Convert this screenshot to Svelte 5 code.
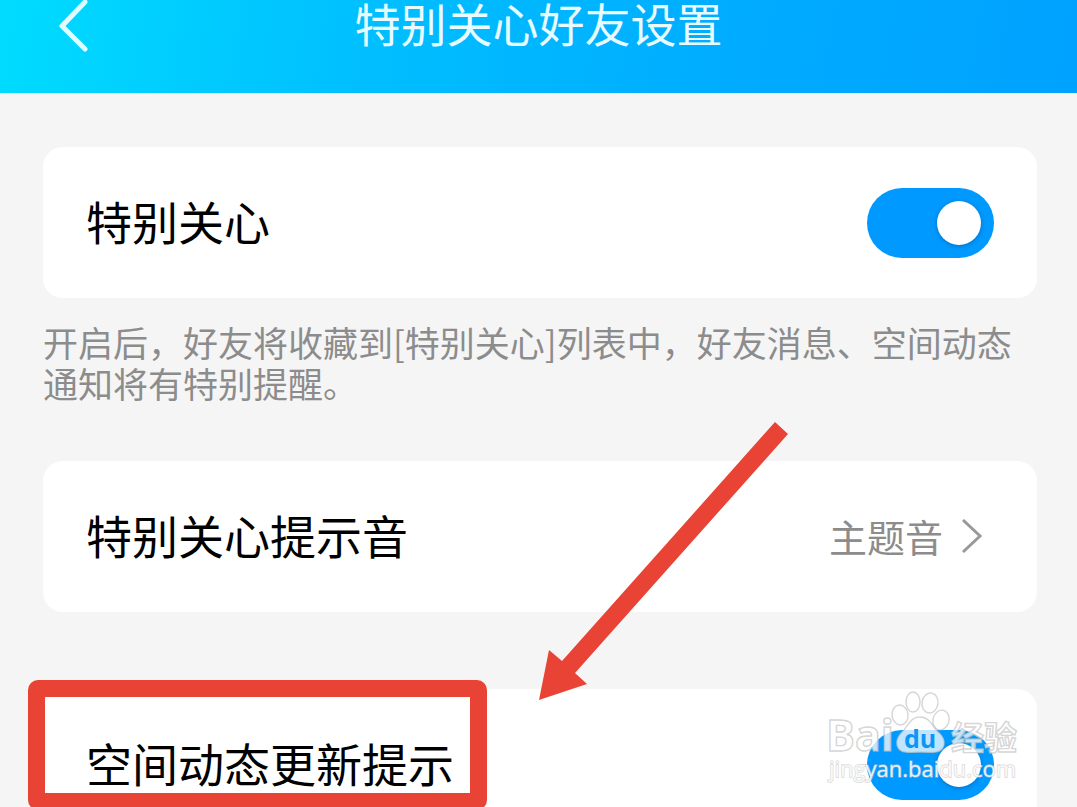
<script>
  let specialCare = $state(true);
  let spaceUpdates = $state(true);
</script>

<div class="page">
  <header>
    <button class="back" aria-label="返回">
      <svg viewBox="0 0 32 54" width="32" height="54" aria-hidden="true">
        <path d="M27 2 4 26 27 49" />
      </svg>
    </button>
    <h1>特别关心好友设置</h1>
  </header>

  <main>
    <section class="card">
      <label class="name" for="care">特别关心</label>
      <input id="care" class="switch" type="checkbox" bind:checked={specialCare} />
    </section>

    <p>开启后，好友将收藏到[特别关心]列表中，好友消息、空间动态通知将有特别提醒。</p>

    <button class="card">
      <span class="name">特别关心提示音</span>
      <span class="value">
        主题音
        <svg viewBox="0 0 24 38" width="24" height="38" aria-hidden="true">
          <path d="M3 3 20 19 3 35" />
        </svg>
      </span>
    </button>

    <section class="card updates">
      <label class="name" for="updates">空间动态更新提示</label>
      <input id="updates" class="switch" type="checkbox" bind:checked={spaceUpdates} />

      <div class="highlight"></div>
      <svg class="arrow" viewBox="539 422 250 279" width="250" height="279" aria-hidden="true">
        <path d="M539 700 549 650 562 661 775 422 788 434 575 673 587 684Z" />
      </svg>
      <svg class="watermark" viewBox="820 685 205 105" width="205" height="105" aria-hidden="true">
        <g class="outline">
          <text class="brand" x="826" y="751">Bai</text>
          <ellipse cx="900" cy="715" rx="8" ry="10" transform="rotate(-8 900 715)" />
          <ellipse cx="913" cy="702" rx="7" ry="10" />
          <ellipse cx="930" cy="703" rx="8" ry="10" transform="rotate(10 930 703)" />
          <ellipse cx="941" cy="720" rx="8" ry="10" transform="rotate(15 941 720)" />
          <path d="M920 717C929 717 932 725 937 731C943 736 945 740 944 745C942 753 935 753 920 752C906 753 899 753 897 745C896 739 899 735 904 730C909 724 911 717 920 717Z" />
          <text class="cjk" x="951" y="750">经验</text>
        </g>
        <text class="du" x="904" y="748">du</text>
        <text class="url" x="829" y="777">jingyan.baidu.com</text>
      </svg>
    </section>
  </main>
</div>

<style>
  :global(body) {
    margin: 0;
    background: #f5f5f5;
  }
  .page {
    height: 100vh;
    overflow: hidden;
    background: #f5f5f5;
    color: #000;
    font-family: "Noto Sans CJK SC", sans-serif;
    font-size: 46px;
    line-height: 68px;
  }
  header {
    display: grid;
    grid-template-columns: 96px 1fr 96px;
    align-items: start;
    height: 93px;
    background: linear-gradient(100deg, #00dcff 0%, #00bfff 34%, #00acff 68%, #00a2ff 100%);
    color: #fff;
  }
  h1 {
    grid-column: 2;
    margin: 0;
    font-size: 46px;
    line-height: 44px;
    font-weight: 400;
    text-align: center;
    color: #e8fbff;
  }
  button {
    border: 0;
    font: inherit;
    color: inherit;
    text-align: left;
    cursor: pointer;
  }
  .back {
    display: flex;
    padding: 0 0 0 58px;
    background: none;
  }
  .back path {
    fill: none;
    stroke: #e2fbff;
    stroke-width: 5;
    stroke-linecap: round;
    stroke-linejoin: round;
  }
  main {
    padding: 54px 40px 0 43px;
  }
  .card {
    position: relative;
    box-sizing: border-box;
    display: flex;
    align-items: center;
    justify-content: space-between;
    width: 100%;
    min-height: 151px;
    padding: 0 43px;
    border-radius: 20px;
    background: #fff;
  }
  .name {
    padding-bottom: 6px;
  }
  p {
    margin: 23px 0 58px;
    font-size: 35px;
    line-height: 41px;
    color: #8c8c8c;
  }
  .value {
    display: flex;
    align-items: center;
    gap: 17px;
    padding: 0 10px 2px 0;
    font-size: 38px;
    color: #8c8c8c;
  }
  .value path {
    fill: none;
    stroke: #999;
    stroke-width: 3;
  }
  .updates {
    margin-top: 77px;
  }
  .switch {
    appearance: none;
    display: flex;
    align-items: center;
    box-sizing: border-box;
    width: 127px;
    height: 70px;
    margin: 0;
    padding: 0 13px;
    border-radius: 35px;
    background: #ccc;
    cursor: pointer;
  }
  .switch::before {
    content: "";
    width: 44px;
    height: 44px;
    border-radius: 50%;
    background: #fff;
    box-shadow: 0 1px 4px rgba(0, 50, 100, 0.4);
  }
  .switch:checked {
    justify-content: flex-end;
    background: #0099ff;
  }
  .highlight {
    position: absolute;
    top: -9px;
    left: -15px;
    box-sizing: border-box;
    width: 459px;
    height: 130px;
    border: 17px solid #e84335;
    border-radius: 10px;
    pointer-events: none;
  }
  .arrow {
    position: absolute;
    top: -267px;
    left: 496px;
    fill: #e84335;
    pointer-events: none;
  }
  .watermark {
    position: absolute;
    top: -4px;
    right: 12px;
    pointer-events: none;
  }
  .outline {
    fill: rgba(255, 255, 255, 0.75);
    stroke: rgba(190, 190, 190, 0.65);
    stroke-width: 1.4;
  }
  .brand {
    font: 700 43px "Open Sans", sans-serif;
  }
  .cjk {
    font: 700 33px "Noto Sans CJK SC", sans-serif;
  }
  .du {
    font: 700 25px "Open Sans", sans-serif;
    fill: #0d96f5;
  }
  .url {
    font: 400 22px "Open Sans", sans-serif;
    fill: rgba(255, 255, 255, 0.85);
    stroke: rgba(190, 190, 190, 0.6);
    stroke-width: 1.4;
    paint-order: stroke;
  }
</style>
